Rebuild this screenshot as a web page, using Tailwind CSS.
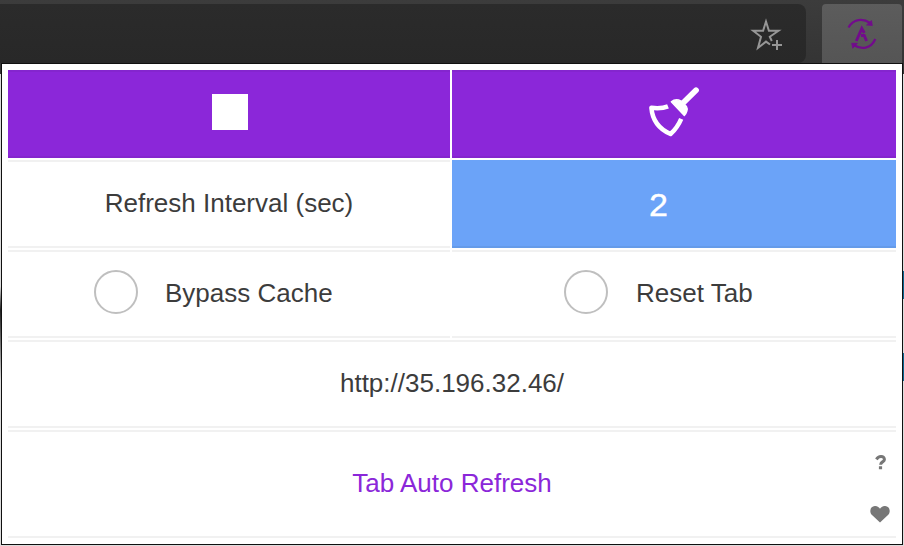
<!DOCTYPE html>
<html lang="en">
<head>
<meta charset="utf-8">
<title>Tab Auto Refresh</title>
<script src="https://cdn.jsdelivr.net/npm/@tailwindcss/browser@4"></script>
</head>
<body class="relative flex h-[546px] w-[904px] flex-col overflow-hidden bg-[#dcdcdc] font-['Liberation_Sans',Arial,sans-serif] text-[26px] leading-none text-[#3c3c3c]">
  <!-- browser toolbar -->
  <header class="flex h-[74px] shrink-0 items-start justify-between bg-[#3a3a3a] bg-linear-to-b from-[#3c3c3c] to-[#333333] pr-0.5 pt-1">
    <div class="flex h-[59px] w-[806px] items-start justify-end rounded-r-lg bg-linear-to-b from-[#2b2b2b] to-[#282828] pr-[22px] pt-3.5">
      <svg class="h-9 w-9" viewBox="0 0 36 36" fill="none" stroke="#969696" stroke-width="2">
        <path d="M23.8 23L21.8 18.8L30.5 12.8H20.9L18 3.5L15.1 12.8H5.2L13 18.8L10 29.8L18 23.6L22 26.5"/>
        <path d="M29 22V32M24 27H34"/>
      </svg>
    </div>
    <div class="flex h-[59px] w-20 items-start justify-center rounded-t bg-linear-to-b from-[#5c5c5c] to-[#555555] pt-3.5">
      <svg class="h-8 w-8" viewBox="0 0 32 32" fill="none" stroke="#720b8c" stroke-width="2.3">
        <path d="M2.5 9.5C7 1 17 -.3 24 5M29.3 21C25 31 15 32 8 27"/>
        <path d="M25.5 2.5L26.3 7.5L20.5 7ZM5.7 25.3L11.5 25.3L6.7 30.3Z" fill="#720b8c" stroke-width=".8"/>
        <path d="M10.3 23L15.8 10.5L18.3 15M15 17.5H18.2L20.6 23" stroke-width="2.9"/>
      </svg>
    </div>
  </header>
  <div class="flex grow justify-between">
    <div class="w-0.5 bg-linear-to-b from-[#dcdcdc] from-45% via-[#222222] via-50% to-[#dcdcdc] to-65%"></div>
    <div class="flex w-px flex-col bg-[#dcdcdc] pt-[197px]">
      <div class="h-7 bg-[#086692]"></div>
      <div class="mt-[54px] h-7 bg-[#086692]"></div>
    </div>
  </div>

  <!-- extension popup -->
  <main class="absolute left-px top-[63px] flex h-[482px] w-[902px] flex-col gap-0.5 border border-[#101010] bg-white px-1.5 pt-1.5">
    <div class="flex h-[88px] gap-0.5">
      <button class="flex w-[442px] items-center justify-center border-y-2 border-[#8425ce] bg-[#8b27d9]"><span class="mt-[-4px] ml-0.5 h-9 w-9 bg-white"></span></button>
      <button class="flex w-[444px] items-start justify-center border-y-2 border-[#8425ce] bg-[#8b27d9] pt-3.5">
        <svg class="h-[52px] w-[52px]" viewBox="0 0 52 52" fill="none" stroke="white" stroke-width="4.5" stroke-linecap="round" stroke-linejoin="round">
          <path d="M48 4.3L34 18" stroke-width="5.8"/>
          <path d="M23.3 15.8C26 13.5 30 13.3 33 15L38.5 20.5C40 23 38.7 27 36.3 29.5Z" fill="white" stroke-width="1.4"/>
          <path d="M20 20.3C14 22.8 8 22.3 3.4 21.8C4.5 35 12 43.5 22.5 48C27.5 43.5 31 38 33.2 32.8" stroke-linecap="butt"/>
        </svg>
      </button>
    </div>
    <div class="flex h-[88px] gap-0.5">
      <div class="flex w-[442px] items-center justify-center border-y-2 border-[#f1f1f1] pb-0.5">Refresh Interval (sec)</div>
      <div class="flex w-[444px] items-center justify-center border-b-2 border-b-[#659be9] bg-[#6ba3f8] pr-[31px] pt-[7px] font-['Liberation_Mono',monospace] text-[34px] text-white [-webkit-text-stroke:0.3px_white]">2</div>
    </div>
    <div class="flex h-[88px] gap-0.5">
      <label class="flex w-[442px] items-center border-y-2 border-[#f1f1f1] pb-0.5 pl-[86px]"><span class="mt-[-2px] mr-[27px] h-11 w-11 rounded-full border-2 border-[#bfbfbf]"></span>Bypass Cache</label>
      <label class="flex w-[444px] items-center border-y-2 border-[#f1f1f1] pb-0.5 pl-28"><span class="mt-[-2px] mr-7 h-11 w-11 rounded-full border-2 border-[#bfbfbf]"></span>Reset Tab</label>
    </div>
    <div class="flex h-[88px] items-center justify-center border-y-2 border-[#f1f1f1] pb-0.5">http://35.196.32.46/</div>
    <footer class="flex h-[108px] items-center border-y-2 border-[#f1f1f1]">
      <a class="w-[859px] pb-0.5 pl-[29px] text-center text-[#8b27d9]">Tab Auto Refresh</a>
      <div class="flex h-full w-[26px] flex-col items-center pr-1 pt-[23px]">
        <svg class="ml-1.5 h-4 w-3 shrink-0" viewBox="0 0 12 16" fill="none" stroke="#777777" stroke-width="3"><path d="M1.4 4.4C3 1.8 4.8 1.5 6.2 1.6C10 2 10 5.3 8.2 6.4C6.8 7.3 5.7 7.8 5.6 9.8M3.9 12.8H7.1"/></svg>
        <svg class="ml-1 mt-[34px] h-[18px] w-5 shrink-0" viewBox="0 0 20 18" fill="#777777"><path d="M10 17.5L2 10C-1 7 0 1.5 4.8 1C7.5 .8 9 2.4 10 3.7C11 2.4 12.5 .8 15.2 1C20 1.5 21 7 18 10Z"/></svg>
      </div>
    </footer>
  </main>
</body>
</html>
